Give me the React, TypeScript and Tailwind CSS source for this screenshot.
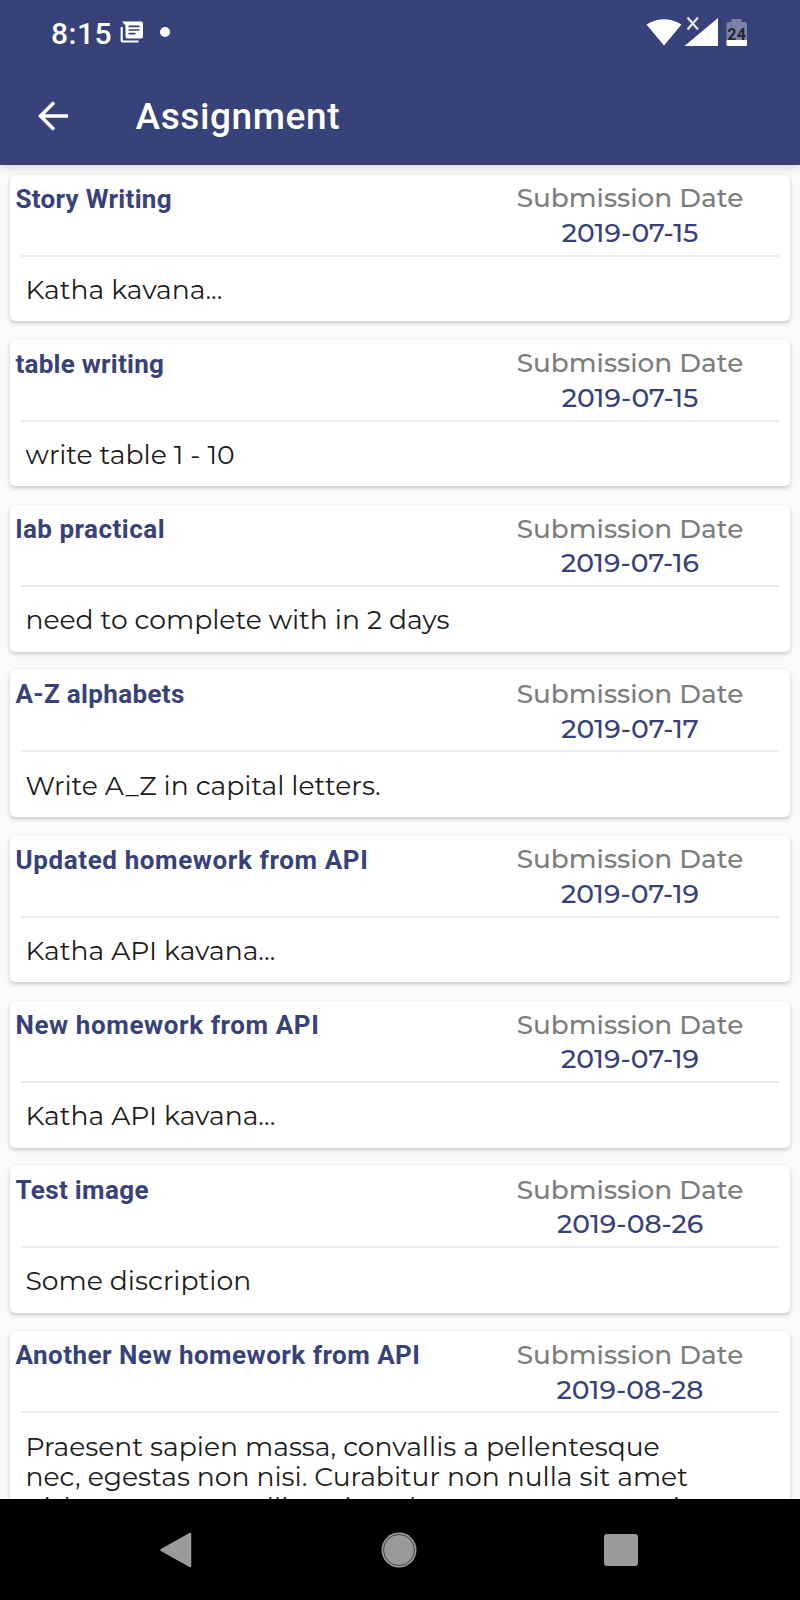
const items = [
  { title: 'Story Writing', tracking: 'tracking-[0.300px]', date: '2019-07-15', body: ['Katha kavana...'] },
  { title: 'table writing', tracking: 'tracking-[0.250px]', date: '2019-07-15', body: ['write table 1 - 10'] },
  { title: 'lab practical', tracking: 'tracking-[0.500px]', date: '2019-07-16', body: ['need to complete with in 2 days'] },
  { title: 'A-Z alphabets', tracking: 'tracking-[0.350px]', date: '2019-07-17', body: ['Write A_Z in capital letters.'] },
  { title: 'Updated homework from API', tracking: 'tracking-[0.610px]', date: '2019-07-19', body: ['Katha API kavana...'] },
  { title: 'New homework from API', tracking: 'tracking-[0.600px]', date: '2019-07-19', body: ['Katha API kavana...'] },
  { title: 'Test image', tracking: 'tracking-[0.350px]', date: '2019-08-26', body: ['Some discription'] },
  {
    title: 'Another New homework from API',
    tracking: 'tracking-[0.480px]',
    date: '2019-08-28',
    body: [
      'Praesent sapien massa, convallis a pellentesque',
      'nec, egestas non nisi. Curabitur non nulla sit amet',
      'nisl tempus convallis quis ac lectus. Praesent sapien',
    ],
  },
];

function StatusBar() {
  return (
    <div className="flex h-[66px] items-center pl-[51px] pr-[53px]">
      <span className="pt-[1px] text-[30px] font-medium leading-none tracking-[0.500px]">8:15</span>
      <svg className="ml-[8px] -mt-[2px]" width="24" height="22" viewBox="0 0 24 22">
        <path d="M2 0.500H21A2 2 0 0 1 23 2.500V15.500A2 2 0 0 1 21 17.500H7.500A2 2 0 0 1 5.500 15.500V4.500Z" fill="#fff" />
        <path d="M8.500 5.300H19.500M8.500 9H19.500M8.500 12.700H15.500" stroke="#38427a" strokeWidth="1.700" />
        <path d="M1.700 6V19.200Q1.700 20.500 3.200 20.500H18.500" stroke="#fff" strokeWidth="2.200" fill="none" />
      </svg>
      <span className="ml-[16px] -mt-[2px] size-[9.500px] rounded-full bg-white" />
      <svg className="ml-auto -mt-[2px]" width="102" height="32" viewBox="645 16 102 32">
        <path d="M646.500 24.500Q664 14 681.500 24.500L664 45.500Z" fill="#fff" />
        <path d="M718 18V46H684.500Z" fill="#fff" />
        <path d="M687.500 17.500L698 29.500M698 17.500L687.500 29.500" stroke="#e3e5f0" strokeWidth="2.200" />
        <path d="M731.500 19H741.500V22H745Q747 22 747 24V40H726.500V24Q726.500 22 728.500 22H731.500Z" fill="#7c82aa" />
        <path d="M726.500 40H747V44.500Q747 46 745.500 46H728Q726.500 46 726.500 44.500Z" fill="#fff" />
        <text x="736.700" y="39.500" textAnchor="middle" fontSize="16" fontWeight="700" letterSpacing="0.300" fill="#23252f">24</text>
      </svg>
    </div>
  );
}

export default function App() {
  return (
    <div className="flex h-[1600px] w-[800px] flex-col overflow-hidden bg-[#fafafa] font-['Roboto',sans-serif]">
      <header className="relative z-10 flex h-[165px] shrink-0 flex-col bg-[#38427a] text-white shadow-[0_2px_8px_rgba(0,0,0,0.16)]">
        <StatusBar />
        <div className="flex h-[99px] items-center pl-[37px]">
          <svg width="32" height="30" viewBox="0 0 32 30" fill="none" stroke="#fff" strokeWidth="3.500">
            <path d="M31 15H3.500M17 1.500L3.500 15L17 28.500" />
          </svg>
          <h1 className="ml-[66.500px] pt-[2px] text-[37px] font-medium tracking-[0.600px]">Assignment</h1>
        </div>
      </header>
      <main className="flex min-h-0 flex-1 flex-col gap-[18.6px] overflow-hidden px-[10px] pt-[9.500px]">
        {items.map((it) => (
          <article key={it.title} className="min-h-[146.700px] shrink-0 rounded-[5px] bg-white shadow-[0_2px_4px_rgba(0,0,0,0.2)]">
            <div className="flex h-[80px] justify-between pl-[5.500px] pr-[20px]">
              <h2 className={'whitespace-nowrap pt-[7px] text-[26px] font-bold leading-[34px] text-[#38427a] ' + it.tracking}>{it.title}</h2>
              <div className="flex w-[280px] flex-col items-center pt-[6.700px] font-['Montserrat',sans-serif] text-[26.600px] font-medium leading-[34.500px]">
                <span className="text-[26.300px] text-[#7d7d7d]">Submission Date</span>
                <span className="text-[#38427a]">{it.date}</span>
              </div>
            </div>
            <div className="mx-[11px] h-[2px] bg-[#ebebeb]" />
            <p className="pl-[15.500px] pt-[18.200px] font-['Montserrat',sans-serif] text-[26.600px] leading-[30.600px] text-[#1c1c1c]">
              {it.body.map((line) => (
                <span key={line} className="block whitespace-nowrap">{line}</span>
              ))}
            </p>
          </article>
        ))}
      </main>
      <nav className="relative flex h-[101px] shrink-0 items-center justify-between bg-black pl-[159px] pr-[162px]">
        <svg width="34" height="36" viewBox="0 0 34 36">
          <path d="M2.500 18L31 2V34Z" fill="#9a9a9a" stroke="#9a9a9a" strokeWidth="2.500" strokeLinejoin="round" />
        </svg>
        <svg width="36" height="36" viewBox="0 0 36 36">
          <circle cx="18" cy="18" r="17.500" fill="#9a9a9a" />
          <circle cx="18" cy="18" r="15.500" fill="none" stroke="#444" strokeWidth="1" />
        </svg>
        <span className="h-[32px] w-[34px] rounded-[3px] bg-[#9a9a9a]" />
      </nav>
    </div>
  );
}
